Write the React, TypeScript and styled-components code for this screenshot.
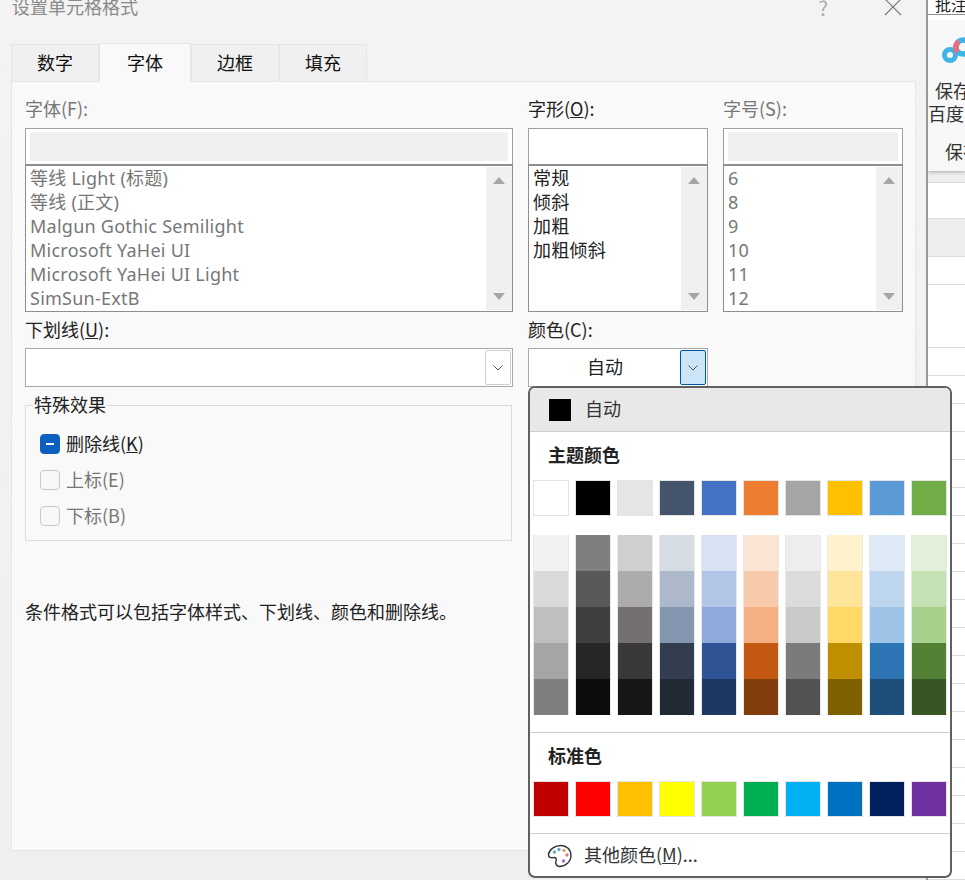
import React from "react";
import styled, { createGlobalStyle } from "styled-components";

const GlobalStyle = createGlobalStyle`
  html, body {
    margin: 0;
    padding: 0;
    background: #fff;
  }
  body {
    font-family: "Noto Sans CJK SC", "Noto Sans", sans-serif;
    font-size: 18px;
    color: #222;
  }
`;

const themeBase = ["#ffffff", "#000000", "#e7e6e6", "#44546a", "#4472c4", "#ed7d31", "#a5a5a5", "#ffc000", "#5b9bd5", "#70ad47"];

const themeShades = [
  ["#f2f2f2", "#7f7f7f", "#d0cece", "#d6dce4", "#d9e2f3", "#fbe5d5", "#ededed", "#fff2cc", "#deeaf6", "#e2efd9"],
  ["#d9d9d9", "#595959", "#aeabab", "#adb9ca", "#b4c6e7", "#f7caac", "#dbdbdb", "#fee599", "#bdd6ee", "#c5e0b3"],
  ["#bfbfbf", "#3f3f3f", "#757070", "#8496b0", "#8eaadb", "#f4b083", "#c9c9c9", "#ffd966", "#9dc3e6", "#a8d08d"],
  ["#a5a5a5", "#262626", "#3a3838", "#323e4f", "#2f5496", "#c45911", "#7b7b7b", "#bf8f00", "#2e75b5", "#538135"],
  ["#7f7f7f", "#0c0c0c", "#171616", "#222a35", "#1f3763", "#833c0b", "#525252", "#7f6000", "#1f4e79", "#375623"],
];

const standard = ["#c00000", "#ff0000", "#ffc000", "#ffff00", "#92d050", "#00b050", "#00b0f0", "#0070c0", "#002060", "#7030a0"];

const fonts = ["等线 Light (标题)", "等线 (正文)", "Malgun Gothic Semilight", "Microsoft YaHei UI", "Microsoft YaHei UI Light", "SimSun-ExtB"];
const styles = ["常规", "倾斜", "加粗", "加粗倾斜"];
const sizes = ["6", "8", "9", "10", "11", "12"];

// heights of the sheet rows showing behind the dialog
const sheetRows = [12, 36, 38, 28, 63, ...Array(20).fill(28)];

const Chevron = () => (
  <svg width="12" height="8" viewBox="0 0 12 8" fill="none">
    <path d="M1.5 1.5 L6 6 L10.5 1.5" stroke="#555" strokeWidth="1" />
  </svg>
);

const Palette = () => (
  <svg width="26" height="26" viewBox="0 0 26 26" fill="none">
    <path
      d="M14 2.5 C8 2.5 2 6.5 1.5 11.5 C1.3 14.5 4 15 6.5 14.6 C8.8 14.3 10 15.5 9 17.8 C8 20.5 9.5 23.5 12.5 23.5 C18.5 23.5 24 18.5 24 12.5 C24 6.5 19.5 2.5 14 2.5 Z"
      stroke="#333"
      strokeWidth="1.4"
      fill="#fff"
    />
    <circle cx="7.5" cy="9" r="1.7" fill="#5fb0a8" />
    <circle cx="12" cy="6.5" r="1.7" fill="#6aa5d8" />
    <circle cx="17" cy="7.5" r="1.7" fill="#e8a060" />
    <circle cx="20" cy="12" r="1.7" fill="#d87890" />
    <circle cx="16.5" cy="18" r="1.7" fill="#a070c0" />
  </svg>
);

const CloudLogo = () => (
  <svg width="37" height="30" viewBox="0 0 37 30" fill="none">
    <circle cx="8" cy="18" r="5.5" stroke="#3fb5e5" strokeWidth="5" />
    <circle cx="21" cy="10" r="7" stroke="#3fb5e5" strokeWidth="5.5" />
    <path d="M15.5 15 A7 7 0 0 1 17 4.5" stroke="#e8707c" strokeWidth="5.5" />
  </svg>
);

export default function App() {
  return (
    <>
      <GlobalStyle />
      <Screen>
        <Dialog>
          <TitleBar>
            <Title>设置单元格格式</Title>
            <TitleActions>
              <HelpMark>?</HelpMark>
              <CloseMark viewBox="0 0 18 18" width="18" height="18">
                <path d="M1 1 L17 17 M17 1 L1 17" stroke="#777" strokeWidth="1.1" />
              </CloseMark>
            </TitleActions>
          </TitleBar>

          <Tabs>
            <Tab>数字</Tab>
            <Tab $active>字体</Tab>
            <Tab>边框</Tab>
            <Tab>填充</Tab>
          </Tabs>

          <Panel>
            <PickerGrid>
              <Picker>
                <FieldLabel $muted>字体(F):</FieldLabel>
                <InputBox>
                  <InputFill />
                </InputBox>
                <ListBox>
                  <ListRows $muted>
                    {fonts.map((f) => (
                      <ListRow key={f}>{f}</ListRow>
                    ))}
                  </ListRows>
                  <ScrollBar>
                    <ArrowUp />
                    <ArrowDown />
                  </ScrollBar>
                </ListBox>
              </Picker>
              <Picker>
                <FieldLabel>
                  字形(<u>O</u>):
                </FieldLabel>
                <InputBox />
                <ListBox>
                  <ListRows>
                    {styles.map((f) => (
                      <ListRow key={f}>{f}</ListRow>
                    ))}
                  </ListRows>
                  <ScrollBar>
                    <ArrowUp />
                    <ArrowDown />
                  </ScrollBar>
                </ListBox>
              </Picker>
              <Picker>
                <FieldLabel $muted>字号(S):</FieldLabel>
                <InputBox>
                  <InputFill />
                </InputBox>
                <ListBox>
                  <ListRows $muted>
                    {sizes.map((f) => (
                      <ListRow key={f}>{f}</ListRow>
                    ))}
                  </ListRows>
                  <ScrollBar>
                    <ArrowUp />
                    <ArrowDown />
                  </ScrollBar>
                </ListBox>
              </Picker>
            </PickerGrid>

            <SelectGrid>
              <SelectField>
                <FieldLabel>
                  下划线(<u>U</u>):
                </FieldLabel>
                <SelectBox>
                  <DropButton>
                    <Chevron />
                  </DropButton>
                </SelectBox>
              </SelectField>
              <SelectField>
                <FieldLabel>颜色(C):</FieldLabel>
                <SelectBox>
                  <SelectValue>自动</SelectValue>
                  <DropButton $open>
                    <Chevron />
                  </DropButton>
                </SelectBox>
              </SelectField>
            </SelectGrid>

            <EffectsGroup>
              <Legend>特殊效果</Legend>
              <CheckRow>
                <CheckBox $mixed />
                <CheckText>
                  删除线(<u>K</u>)
                </CheckText>
              </CheckRow>
              <CheckRow $muted>
                <CheckBox />
                <CheckText>上标(E)</CheckText>
              </CheckRow>
              <CheckRow $muted>
                <CheckBox />
                <CheckText>下标(B)</CheckText>
              </CheckRow>
            </EffectsGroup>

            <Note>条件格式可以包括字体样式、下划线、颜色和删除线。</Note>
          </Panel>
        </Dialog>

        <SheetStrip>
          <RibbonTab>批注</RibbonTab>
          <RibbonPanel>
            <LogoWrap>
              <CloudLogo />
            </LogoWrap>
            <RibbonText>保存到</RibbonText>
            <RibbonText $shift>百度网盘</RibbonText>
            <RibbonGroup>保存</RibbonGroup>
          </RibbonPanel>
          <SheetRows>
            {sheetRows.map((h, i) => (
              <SheetRow key={i} $height={h} $tone={i === 0 ? "#efefef" : i === 2 ? "#eeeeee" : "#fff"} />
            ))}
          </SheetRows>
        </SheetStrip>

        <ColorMenu>
          <AutoRow>
            <AutoSwatch />
            <RowText>自动</RowText>
          </AutoRow>
          <SectionTitle>主题颜色</SectionTitle>
          <SwatchRow>
            {themeBase.map((c) => (
              <Swatch key={c} $color={c} />
            ))}
          </SwatchRow>
          <ShadeGrid>
            {themeShades.flat().map((c, i) => (
              <Shade key={i} $color={c} />
            ))}
          </ShadeGrid>
          <Divider />
          <SectionTitle>标准色</SectionTitle>
          <SwatchRow>
            {standard.map((c) => (
              <Swatch key={c} $color={c} />
            ))}
          </SwatchRow>
          <Divider $tight />
          <MoreRow>
            <Palette />
            <RowText>
              其他颜色(<u>M</u>)...
            </RowText>
          </MoreRow>
        </ColorMenu>
      </Screen>
    </>
  );
}

const Screen = styled.div`
  position: relative;
  display: flex;
  width: 965px;
  height: 880px;
  overflow: hidden;
`;

const Dialog = styled.div`
  box-sizing: border-box;
  width: 928px;
  height: 880px;
  flex: none;
  background: linear-gradient(#f3f3f3, #efefef);
  border-right: 2px solid #999;
  padding-left: 11px;
`;

const TitleBar = styled.div`
  height: 43px;
  display: flex;
  justify-content: space-between;
  margin-left: 1px;
`;

const Title = styled.div`
  margin-top: -6px;
  height: 24px;
  line-height: 24px;
  font-size: 18px;
  color: #8a8a8a;
`;

const TitleActions = styled.div`
  display: flex;
  align-items: flex-start;
  gap: 56px;
  margin-right: 24px;
`;

const HelpMark = styled.div`
  margin-top: -4px;
  line-height: 24px;
  font-size: 20px;
  color: #aaa;
`;

const CloseMark = styled.svg`
  margin-top: -2px;
`;

const Tabs = styled.div`
  display: flex;
  height: 38px;
`;

const Tab = styled.div<{ $active?: boolean }>`
  box-sizing: border-box;
  width: ${(p) => (p.$active ? "92px" : "88px")};
  height: ${(p) => (p.$active ? "39px" : "37px")};
  margin-top: ${(p) => (p.$active ? "0" : "1px")};
  padding-bottom: 3px;
  display: flex;
  align-items: center;
  justify-content: center;
  background: ${(p) => (p.$active ? "#f9f9f9" : "#f0f0f0")};
  border: 1px solid #e6e6e6;
  border-bottom: none;
  color: #111;
  font-size: 18px;
  position: relative;
  z-index: ${(p) => (p.$active ? 1 : 0)};
`;

const Panel = styled.div`
  box-sizing: border-box;
  width: 905px;
  height: 770px;
  background: #f9f9f9;
  border: 1px solid #e6e6e6;
  padding: 14px 12px 0 13px;
`;

const PickerGrid = styled.div`
  display: grid;
  grid-template-columns: 488px 180px 180px;
  gap: 15px;
`;

const Picker = styled.div`
  display: flex;
  flex-direction: column;
`;

const FieldLabel = styled.div<{ $muted?: boolean }>`
  height: 32px;
  line-height: 24px;
  font-size: 18px;
  color: ${(p) => (p.$muted ? "#777" : "#222")};
`;

const InputBox = styled.div`
  box-sizing: border-box;
  height: 37px;
  background: #fff;
  border: 1px solid #a0a0a0;
  padding: 3px 4px 3px;
`;

const InputFill = styled.div`
  height: 100%;
  background: #f0f0f0;
`;

const ListBox = styled.div`
  box-sizing: border-box;
  height: 148px;
  margin-top: -1px;
  background: #fff;
  border: 1px solid #8e8e8e;
  border-top-width: 2px;
  display: flex;
  overflow: hidden;
`;

const ListRows = styled.div<{ $muted?: boolean }>`
  flex: 1;
  padding-left: 4px;
  color: ${(p) => (p.$muted ? "#777" : "#222")};
`;

const ListRow = styled.div`
  height: 24px;
  line-height: 24px;
  font-family: "Noto Sans", "Noto Sans CJK SC", sans-serif;
  font-size: 18px;
  letter-spacing: 0.25px;
  white-space: nowrap;
`;

const ScrollBar = styled.div`
  width: 26px;
  margin: 1px 0;
  background: #f0f0f0;
  display: flex;
  flex-direction: column;
  align-items: center;
  justify-content: space-between;
  padding: 10px 0;
  box-sizing: border-box;
`;

const ArrowUp = styled.div`
  width: 0;
  height: 0;
  border-left: 6px solid transparent;
  border-right: 6px solid transparent;
  border-bottom: 7px solid #a6a6a6;
`;

const ArrowDown = styled.div`
  width: 0;
  height: 0;
  border-left: 6px solid transparent;
  border-right: 6px solid transparent;
  border-top: 7px solid #a6a6a6;
`;

const SelectGrid = styled.div`
  display: grid;
  grid-template-columns: 488px 180px;
  gap: 15px;
  margin-top: 5px;
`;

const SelectField = styled.div`
  display: flex;
  flex-direction: column;
`;

const SelectBox = styled.div`
  box-sizing: border-box;
  height: 39px;
  margin-top: -1px;
  background: #fff;
  border: 1px solid #a8a8a8;
  display: flex;
  align-items: center;
  justify-content: flex-end;
  padding-right: 1px;
  position: relative;
`;

const SelectValue = styled.div`
  flex: 1;
  padding-left: 58px;
  padding-bottom: 3px;
  font-size: 18px;
  color: #222;
`;

const DropButton = styled.div<{ $open?: boolean }>`
  box-sizing: border-box;
  width: 26px;
  height: 35px;
  display: flex;
  align-items: center;
  justify-content: center;
  border-radius: 2px;
  background: ${(p) => (p.$open ? "#cce4f7" : "#fff")};
  border: 1px solid ${(p) => (p.$open ? "#005499" : "#cfcfcf")};
`;

const EffectsGroup = styled.div`
  box-sizing: border-box;
  position: relative;
  width: 487px;
  height: 136px;
  margin-top: 18px;
  border: 1px solid #dcdcdc;
  padding-top: 20px;
  padding-left: 14px;
`;

const Legend = styled.div`
  position: absolute;
  top: -13px;
  left: 7px;
  padding: 0 1px;
  line-height: 22px;
  background: #f9f9f9;
  font-size: 18px;
  color: #222;
`;

const CheckRow = styled.div<{ $muted?: boolean }>`
  display: flex;
  align-items: center;
  gap: 6px;
  height: 36px;
  font-size: 18px;
  color: ${(p) => (p.$muted ? "#777" : "#222")};
`;

const CheckText = styled.span`
  padding-bottom: 2px;
`;

const CheckBox = styled.div<{ $mixed?: boolean }>`
  box-sizing: border-box;
  width: 20px;
  height: 20px;
  border-radius: 4px;
  position: relative;
  background: ${(p) => (p.$mixed ? "#0a5fbf" : "#f8f8f8")};
  border: 1px solid ${(p) => (p.$mixed ? "#0a5fbf" : "#c8c8c8")};
  &::after {
    content: "";
    display: ${(p) => (p.$mixed ? "block" : "none")};
    position: absolute;
    left: 5px;
    top: 8px;
    width: 8px;
    height: 2px;
    background: #fff;
  }
`;

const Note = styled.div`
  margin-top: 58px;
  line-height: 24px;
  font-size: 18px;
  color: #222;
`;

const SheetStrip = styled.div`
  flex: 1;
  min-width: 0;
  display: flex;
  flex-direction: column;
  overflow: hidden;
  background: #fff;
`;

const RibbonTab = styled.div`
  height: 14px;
  flex: none;
  padding-left: 7px;
  line-height: 8px;
  font-size: 16px;
  white-space: nowrap;
  border-bottom: 1px solid #8a8a8a;
  color: #222;
`;

const RibbonPanel = styled.div`
  box-sizing: border-box;
  height: 151px;
  flex: none;
  margin-top: 5px;
  background: #f8f8f8;
  box-shadow: 0 2px 3px rgba(0, 0, 0, 0.2);
  padding-top: 17px;
  white-space: nowrap;
  line-height: 23px;
  font-size: 18px;
  color: #333;
  position: relative;
`;

const LogoWrap = styled.div`
  height: 30px;
  margin-left: 14px;
  margin-bottom: 12px;
  line-height: 0;
`;

const RibbonText = styled.div<{ $shift?: boolean }>`
  margin-left: ${(p) => (p.$shift ? "0" : "7px")};
`;

const RibbonGroup = styled.div`
  margin-top: 15px;
  margin-left: 17px;
`;

const SheetRows = styled.div`
  flex: 1;
  overflow: hidden;
  box-shadow: inset 7px 0 7px -5px rgba(0, 0, 0, 0.1);
`;

const SheetRow = styled.div<{ $height: number; $tone: string }>`
  box-sizing: border-box;
  height: ${(p) => p.$height}px;
  background: ${(p) => p.$tone};
  border-bottom: 1px solid #dcdcdc;
`;

const ColorMenu = styled.div`
  box-sizing: border-box;
  position: absolute;
  left: 528px;
  top: 386px;
  width: 424px;
  height: 492px;
  background: #fff;
  border: 2px solid #606060;
  border-radius: 7px;
  overflow: hidden;
`;

const AutoRow = styled.div`
  box-sizing: border-box;
  height: 44px;
  display: flex;
  align-items: center;
  gap: 14px;
  padding-left: 19px;
  background: #e8e8e8;
  border-bottom: 1px solid #cfcfcf;
  font-size: 18px;
  color: #333;
`;

const RowText = styled.span`
  padding-bottom: 3px;
`;

const AutoSwatch = styled.div`
  width: 22px;
  height: 22px;
  background: #000;
`;

const SectionTitle = styled.div`
  box-sizing: border-box;
  padding: 0 0 4px 18px;
  height: 48px;
  display: flex;
  align-items: center;
  font-size: 18px;
  font-weight: 700;
  color: #222;
`;

const SwatchRow = styled.div`
  display: grid;
  grid-template-columns: repeat(10, 36px);
  column-gap: 6px;
  padding-left: 3px;
`;

const Swatch = styled.div<{ $color: string }>`
  box-sizing: border-box;
  height: 36px;
  background: ${(p) => p.$color};
  border: 1px solid #e4e4e4;
`;

const ShadeGrid = styled.div`
  display: grid;
  grid-template-columns: repeat(10, 36px);
  column-gap: 6px;
  padding-left: 3px;
  margin-top: 19px;
`;

const Shade = styled.div<{ $color: string }>`
  box-sizing: border-box;
  height: 36px;
  background: ${(p) => p.$color};
  border-left: 1px solid #e8e8e8;
  border-right: 1px solid #e8e8e8;
`;

const Divider = styled.div<{ $tight?: boolean }>`
  height: 1px;
  margin-top: ${(p) => (p.$tight ? "16px" : "17px")};
  background: #cfcfcf;
`;

const MoreRow = styled.div`
  height: 43px;
  display: flex;
  align-items: center;
  gap: 11px;
  padding-left: 17px;
  font-size: 18px;
  color: #333;
`;
